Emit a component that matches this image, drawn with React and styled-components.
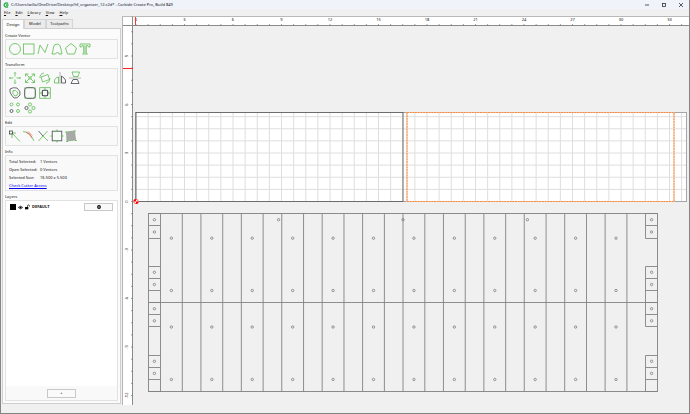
import React from "react";
import styled, { createGlobalStyle } from "styled-components";

const GlobalStyle = createGlobalStyle`
	* {
		box-sizing: border-box;
	}
	body {
		margin: 0;
		background: #f0f0f0;
		color: #111;
		font: 4px/6px "Noto Sans", "Open Sans", sans-serif;
	}
	button {
		font: inherit;
		color: inherit;
		padding: 0;
		border: 0;
		background: none;
	}
`;

const Window = styled.div`
	display: flex;
	flex-direction: column;
	height: 100vh;
	overflow: hidden;
	border: solid #858585;
	border-width: 0 1px 1px;
`;

const TitleBar = styled.header`
	display: flex;
	align-items: center;
	flex: none;
	height: 9px;
	padding-left: 2px;
	gap: 2px;
	background: #f0f3fa;
`;

const Title = styled.h1`
	flex: 1;
	margin: 0;
	font-size: 4px;
	font-weight: 400;
	white-space: nowrap;
`;

const WindowButtons = styled.div`
	display: flex;
`;

const WindowButton = styled.button`
	display: grid;
	place-items: center;
	width: 17px;
	height: 8px;
`;

const MenuBar = styled.nav`
	display: flex;
	align-items: center;
	flex: none;
	height: 7px;
	padding-left: 3px;
	gap: 5px;
`;

const Main = styled.main`
	display: flex;
	flex: 1;
	min-height: 0;
	padding-bottom: 8px;
`;

const Sidebar = styled.aside`
	display: flex;
	flex-direction: column;
	flex: none;
	width: 122px;
	padding: 3px 1px 1px;
	border-right: 1px solid #b5b5b5;
`;

const Tabs = styled.div`
	display: flex;
	align-items: flex-end;
	height: 9px;
	flex: none;
`;

const Tab = styled.button`
	height: ${(p) => (p.$active ? 10 : 9)}px;
	width: ${(p) => p.$width}px;
	border: 1px solid #d5d5d5;
	border-bottom: 0;
	background: ${(p) => (p.$active ? "#fbfbfb" : "#ebebeb")};
	margin-bottom: ${(p) => (p.$active ? -1 : 0)}px;
	z-index: 1;
`;

const Panel = styled.div`
	display: flex;
	flex-direction: column;
	flex: 1;
	min-height: 0;
	border: 1px solid #cfcfcf;
	background: #fbfbfb;
	padding: 4px 2px 2px;
	gap: 3px;
`;

const Group = styled.section`
	display: flex;
	flex-direction: column;
	flex: ${(p) => (p.$grow ? 1 : "none")};
	min-height: 0;
`;

const GroupTitle = styled.h2`
	margin: 0;
	font-size: 4px;
	line-height: 6px;
	font-weight: 400;
`;

const GroupBox = styled.div`
	display: flex;
	flex-direction: column;
	flex: 1;
	border: 1px solid #e2e2e2;
	background: #f9f9f9;
	padding: ${(p) => p.$pad || "3px"};
`;

const ToolRow = styled.div`
	display: flex;
	gap: ${(p) => p.$gap}px;
	height: ${(p) => p.$height}px;
	align-items: center;
`;

const ToolButton = styled.button`
	display: flex;
	svg {
		width: 12px;
		height: 12px;
		fill: none;
		stroke: #5cbb52;
		stroke-width: 0.8;
		overflow: visible;
	}
`;

const Facts = styled.dl`
	display: grid;
	grid-template-columns: 31px 1fr;
	row-gap: 2px;
	margin: 0;
`;

const Fact = styled.div`
	display: contents;
	dd {
		margin: 0;
	}
`;

const Link = styled.a`
	color: #0000ee;
	margin-top: 2px;
	align-self: flex-start;
`;

const LayerList = styled.ul`
	flex: 1;
	margin: 0;
	padding: 2px 4px;
	list-style: none;
	background: #fff;
`;

const Layer = styled.li`
	display: flex;
	align-items: center;
	gap: 2px;
	font-weight: 700;
`;

const Swatch = styled.span`
	width: 6px;
	height: 6px;
	background: #000;
`;

const LayerName = styled.span`
	flex: 1;
`;

const PushButton = styled.button`
	display: grid;
	place-items: center;
	width: 29px;
	height: ${(p) => p.$height}px;
	border: 1px solid #c8c8c8;
	background: #fafafa;
`;

const LayerFooter = styled.div`
	display: grid;
	place-items: center;
	height: 14px;
`;

const Workspace = styled.div`
	flex: 1;
	min-width: 0;
	display: grid;
	grid-template-columns: 10px 1fr;
	grid-template-rows: 10px 1fr;
	overflow: hidden;
`;

const RulerCorner = styled.div`
	background: #fff;
	border: solid #8a8a8a;
	border-width: 0 1px 1px 0;
	border-top: 1px solid #b9b9b9;
`;

const Drawing = styled.svg`
	display: block;
	width: 100%;
	height: 100%;
	min-height: 0;
	background: ${(p) => (p.$ruler ? "#fff" : "#f0f0f0")};
	text {
		font: 4px "Noto Sans", "Open Sans", sans-serif;
		fill: #111;
		text-anchor: middle;
	}
`;

// canvas scale: 3 inches = 48.5px, a tick every 3/4 inch
const STEP = 12.125;
const range = (n) => Array.from({ length: n }, (_, i) => i);

const DARK = "#42474d";

const createTools = [
	["Circle", <circle cx="6" cy="6" r="5.5" />],
	["Rectangle", <rect x=".5" y="1" width="10.500" height="10" />],
	["Polyline", <path d="M1 11 L3 2 L8 9.500 L11 1" />],
	["Curve", <path d="M1 11 H4.500 Q5 9.500 6.500 9.500 Q8 9.500 8 11 H11 Q10.500 9 10 6 Q9.500 1.500 6.500 1 Q3 1 2.500 4 Q2 8 1 11 Z" />],
	["Polygon", <path d="M6 .5 L11.500 5 L9.500 11 H2.500 L.5 5 Z" />],
	["Text", <path d="M1 1 H11 V4 H9.500 L9 2.700 H7.300 V10 L8.500 11 H3.500 L4.700 10 V2.700 H3 L2.500 4 H1 Z M6 2.500 V10.500" />],
];

const transformRows = [
	[
		["Move", <path d="M6 .5 V4.500 M6 7.500 V11.500 M.5 6 H4.500 M7.500 6 H11.500 M5 1.500 L6 .5 L7 1.500 M5 10.500 L6 11.500 L7 10.500 M1.500 5 L.5 6 L1.500 7 M10.500 5 L11.500 6 L10.500 7 M6 6 H6.100" />],
		["Scale", <path d="M1.500 4.500 V2 H4.500 M7.500 2 H10.500 V4.500 M10.500 7.500 V10.500 H7.500 M4.500 10.500 H1.500 V7.500 M1.500 2 L5 5 M10.500 2 L7 5 M10.500 10.500 L7 7 M1.500 10.500 L5 7 M5 5 H7 V7 H5 Z" />],
		["Rotate", <g><path d="M2 5 L9 2.500 L10.500 7.500 L3.500 10 Z" /><path d="M1 6 Q.5 2 5 1 M11 6 Q11 10.500 7 11.500" /></g>],
		["Mirror horizontal", <g><path d="M5 11 H.5 V8 Q2 5 4.500 5 V11" /><path d="M7.500 11 V4 Q10.500 6 11.500 8 V11 Z" stroke={DARK} /><path d="M6 0 V12" stroke="#999" strokeWidth=".7" /></g>],
		["Mirror vertical", <g><path d="M3 0 H10.500 L9 4.500 H4.500 Z" /><path d="M4 7.500 H8.500 L10 11.500 H2 Z" stroke={DARK} /><path d="M0 6 H12" stroke="#999" strokeWidth=".7" /></g>],
	],
	[
		["Offset", <g><path d="M1 2 Q4 0 8 1 Q12 4 11 8 Q8 12 5 11 Q2 8 1 5 Z" stroke={DARK} /><path d="M4 3.500 Q7 2.500 9 6 Q8.500 9 6 9 Q3 7 4 3.500 Z" /></g>],
		["Round corners", <g><rect x=".7" y=".7" width="10.600" height="10.600" stroke="#8fcf88" /><rect x=".7" y=".7" width="10.600" height="10.600" rx="2.500" stroke={DARK} /></g>],
		["Align", <g><rect x=".7" y=".7" width="10.600" height="10.600" /><path d="M6 1 V3 M6 9 V11 M1 6 H3 M9 6 H11" /><rect x="3.300" y="3.300" width="5.400" height="5.400" rx="1" stroke={DARK} strokeWidth="1.100" /></g>],
	],
	[
		["Linear array", <g><circle cx="2.500" cy="2.500" r="1.500" /><circle cx="9" cy="2.500" r="1.500" /><circle cx="9" cy="9" r="1.500" /><circle cx="2.500" cy="9" r="1.500" stroke={DARK} /></g>],
		["Circular array", <g><circle cx="6" cy="2.500" r="1.600" /><circle cx="9.500" cy="6" r="1.600" /><circle cx="6" cy="9.500" r="1.600" /><circle cx="2.500" cy="6" r="1.600" stroke={DARK} /></g>],
	],
];

const editTools = [
	["Node edit", <g><path d="M3 3 L11 11.500 M3 8 V3 H7" /><rect x=".5" y="1" width="3" height="3" stroke={DARK} /></g>],
	["Trim", <g><path d="M0 1.500 Q7 2 11 11" /><path d="M3 2 Q7 4 9 8 M5 1.500 L9 5.500" stroke="#e8604a" /></g>],
	["Join", <g><path d="M1.500 11 L10.500 1 M6 6 L11 11" /><path d="M1.500 1 L6 6" stroke={DARK} /></g>],
	["Resize", <g><rect x="1.200" y="1.200" width="9.600" height="9.600" stroke={DARK} /><path d="M5 1.200 H7 M5 10.800 H7 M1.200 5 V7 M10.800 5 V7 M6 -.5 V2 M6 10 V12.500 M-.5 6 H2 M10 6 H12.500" /></g>],
	["Warp", <g><path d="M1.500 2 L9.500 1 L10.500 10 L2 11 Z" fill="#a9a9a9" stroke="#8cab86" /><path d="M0 2 H2 M9 1 H11 M10 10.500 H12 M1 11.500 H3" /></g>],
];

const facts = [
	["Total Selected:", "1 Vectors"],
	["Open Selected:", "0 Vectors"],
	["Selected Size:", "16.500 x 5.500"],
];

const Tools = ({ items, gap, height }) => (
	<ToolRow $gap={gap} $height={height}>
		{items.map(([name, icon]) => (
			<ToolButton key={name} aria-label={name}>
				<svg viewBox="0 0 12 12">{icon}</svg>
			</ToolButton>
		))}
	</ToolRow>
);

const TopRuler = () => (
	<Drawing $ruler>
		<path d="M0 .5 H2000" stroke="#b9b9b9" />
		<path d="M0 9.500 H2000" stroke="#8a8a8a" />
		{range(150).map((i) => (
			<path key={i} d={`M${3 + i * STEP} 8 V10`} stroke="#777" strokeWidth=".7" />
		))}
		{range(12).map((i) => (
			<text key={i} x={3 + i * STEP * 4} y="5">
				{i * 3}
			</text>
		))}
		<path d="M2.500 1 V9" stroke="#f33" />
	</Drawing>
);

const SideRuler = () => (
	<Drawing $ruler>
		<path d="M9.500 0 V1000" stroke="#8a8a8a" />
		{range(31).map((i) => (
			<path key={i} d={`M8 ${175.5 + (i - 14) * STEP} H10`} stroke="#777" strokeWidth=".7" />
		))}
		{range(8).map((i) => {
			const y = 175.5 + (i - 3) * STEP * 4;
			return (
				<text key={i} x="4" y={y} transform={`rotate(-90 4 ${y})`} dy="1">
					{(3 - i) * 3}
				</text>
			);
		})}
		<path d="M0 42.500 H10" stroke="#f22" />
	</Drawing>
);

const PERIOD = 40.42;
const tabEdges = [187.5, 199.5, 212.5, 240.5, 252.5, 264.5, 276.5, 288.5, 300.5, 329.5, 341.5, 353.5, 365.5];
const tabHoles = [193.7, 206, 246.3, 258.5, 282.7, 294.8, 335.3, 347.4];
const slotHoles = [212.2, 264.5, 301, 353.5];

const Hole = ({ x, y }) => <circle cx={x} cy={y} r="1.2" />;

const Canvas = () => (
	<Drawing role="img" aria-label="Design canvas">
		<rect x="2.500" y="86.500" width="551" height="89" fill="#fff" stroke="#a5a5a5" />
		<g stroke="#dedede">
			{range(45).map((i) => (
				<path key={i} d={`M${3 + (i + 1) * STEP} 87 V175`} />
			))}
			{range(7).map((i) => (
				<path key={i} d={`M3 ${175.5 - (i + 1) * STEP} H553`} />
			))}
		</g>
		<rect x="3" y="86.500" width="267" height="89" fill="none" stroke="#6c6c6c" />
		<rect x="274" y="86.500" width="267" height="89" fill="none" stroke="#fbcba8" />
		<rect x="274" y="86.500" width="267" height="89" fill="none" stroke="#f28b46" strokeDasharray="2 .7" />
		<g fill="none" stroke="#828282" strokeWidth=".9">
			<rect x="15.500" y="187.500" width="509" height="178" />
			<path d="M15.500 276.500 H524.500" />
			{range(12).map((i) => (
				<path key={i} d={`M${27.5 + i * PERIOD} 187.500 V365.500 M${49.3 + i * PERIOD} 187.500 V365.500`} />
			))}
			{tabEdges.map((y) => (
				<path key={y} d={`M15.500 ${y} H27.500 M512.500 ${y} H524.500`} />
			))}
			<path d="M512.500 187.500 V212.500 M512.500 240.500 V300.500 M512.500 329.500 V365.500" />
		</g>
		<g fill="none" stroke="#707070" strokeWidth=".7">
			{tabHoles.map((y) => (
				<g key={y}>
					<Hole x={21.4} y={y} />
					<Hole x={518.6} y={y} />
				</g>
			))}
			{slotHoles.map((y) => range(12).map((i) => <Hole key={`${y}-${i}`} x={38.4 + i * PERIOD} y={y} />))}
			<Hole x={145.6} y={193.7} />
			<Hole x={270} y={193.7} />
			<Hole x={394.4} y={193.7} />
		</g>
		<g>
			<circle cx="3" cy="175.500" r="2.500" fill="#fff" />
			<path d="M3 175.500 V173 A2.500 2.500 0 0 0 .5 175.500 Z M3 175.500 V178 A2.500 2.500 0 0 0 5.500 175.500 Z" fill="#f00" />
			<circle cx="3" cy="175.500" r="2.200" fill="none" stroke="#f00" strokeWidth=".6" />
		</g>
	</Drawing>
);

export default function App() {
	return (
		<>
			<GlobalStyle />
			<Window>
				<TitleBar>
					<svg width="6" height="6" viewBox="0 0 6 6" fill="none" stroke="#22ad3c" strokeWidth="1.3">
						<path d="M5 1.500 A2.200 2.200 0 1 0 5 4.500 M3 3 H5.500" />
					</svg>
					<Title>C:/Users/willa/OneDrive/Desktop/hf_organizer_12.c2d* - Carbide Create Pro, Build 849</Title>
					<WindowButtons>
						<WindowButton aria-label="Minimize">
							<svg width="4" height="4" stroke="#333" strokeWidth=".8"><path d="M0 2 H4" /></svg>
						</WindowButton>
						<WindowButton aria-label="Maximize">
							<svg width="4" height="4" fill="none" stroke="#333" strokeWidth=".8"><rect x=".5" y=".5" width="3" height="3" /></svg>
						</WindowButton>
						<WindowButton aria-label="Close">
							<svg width="4" height="4" stroke="#333" strokeWidth=".8"><path d="M0 0 L4 4 M4 0 L0 4" /></svg>
						</WindowButton>
					</WindowButtons>
				</TitleBar>
				<MenuBar>
					{["File", "Edit", "Library", "View", "Help"].map((name) => (
						<button key={name}>
							<u>{name[0]}</u>
							{name.slice(1)}
						</button>
					))}
				</MenuBar>
				<Main>
					<Sidebar>
						<Tabs role="tablist">
							<Tab role="tab" aria-selected="true" $active $width={22}>Design</Tab>
							<Tab role="tab" $width={22}>Model</Tab>
							<Tab role="tab" $width={27}>Toolpaths</Tab>
						</Tabs>
						<Panel>
							<Group>
								<GroupTitle>Create Vector</GroupTitle>
								<GroupBox>
									<Tools items={createTools} gap={2} height={12} />
								</GroupBox>
							</Group>
							<Group>
								<GroupTitle>Transform</GroupTitle>
								<GroupBox $pad="1px 3px">
									{transformRows.map((row, i) => (
										<Tools key={i} items={row} gap={3} height={15} />
									))}
								</GroupBox>
							</Group>
							<Group>
								<GroupTitle>Edit</GroupTitle>
								<GroupBox>
									<Tools items={editTools} gap={2} height={12} />
								</GroupBox>
							</Group>
							<Group>
								<GroupTitle>Info</GroupTitle>
								<GroupBox $pad="3px 3px 1px">
									<Facts>
										{facts.map(([label, value]) => (
											<Fact key={label}>
												<dt>{label}</dt>
												<dd>{value}</dd>
											</Fact>
										))}
									</Facts>
									<Link href="#cutter">Check Cutter Access</Link>
								</GroupBox>
							</Group>
							<Group $grow>
								<GroupTitle>Layers</GroupTitle>
								<GroupBox $pad="0">
									<LayerList>
										<Layer>
											<Swatch />
											<svg width="5" height="5" viewBox="0 0 6 5">
												<path d="M.3 2.500 Q3 -.8 5.700 2.500 Q3 5.800 .3 2.500 Z" fill="none" stroke="#000" strokeWidth=".8" />
												<circle cx="3" cy="2.500" r="1.200" />
											</svg>
											<svg width="5" height="6" viewBox="0 0 6 6">
												<rect x="0" y="3" width="4" height="2.800" />
												<path d="M3 3 V1.800 Q3 .5 4.300 .5 Q5.500 .5 5.500 2.500" fill="none" stroke="#000" strokeWidth=".8" />
											</svg>
											<LayerName>DEFAULT</LayerName>
											<PushButton $height={8} aria-label="Layer settings">
												<svg width="4" height="4" viewBox="0 0 4 4">
													<circle cx="2" cy="2" r="1.300" fill="none" stroke="#000" strokeWidth="1.200" />
												</svg>
											</PushButton>
										</Layer>
									</LayerList>
									<LayerFooter>
										<PushButton $height={9}>+</PushButton>
									</LayerFooter>
								</GroupBox>
							</Group>
						</Panel>
					</Sidebar>
					<Workspace>
						<RulerCorner />
						<TopRuler />
						<SideRuler />
						<Canvas />
					</Workspace>
				</Main>
			</Window>
		</>
	);
}
